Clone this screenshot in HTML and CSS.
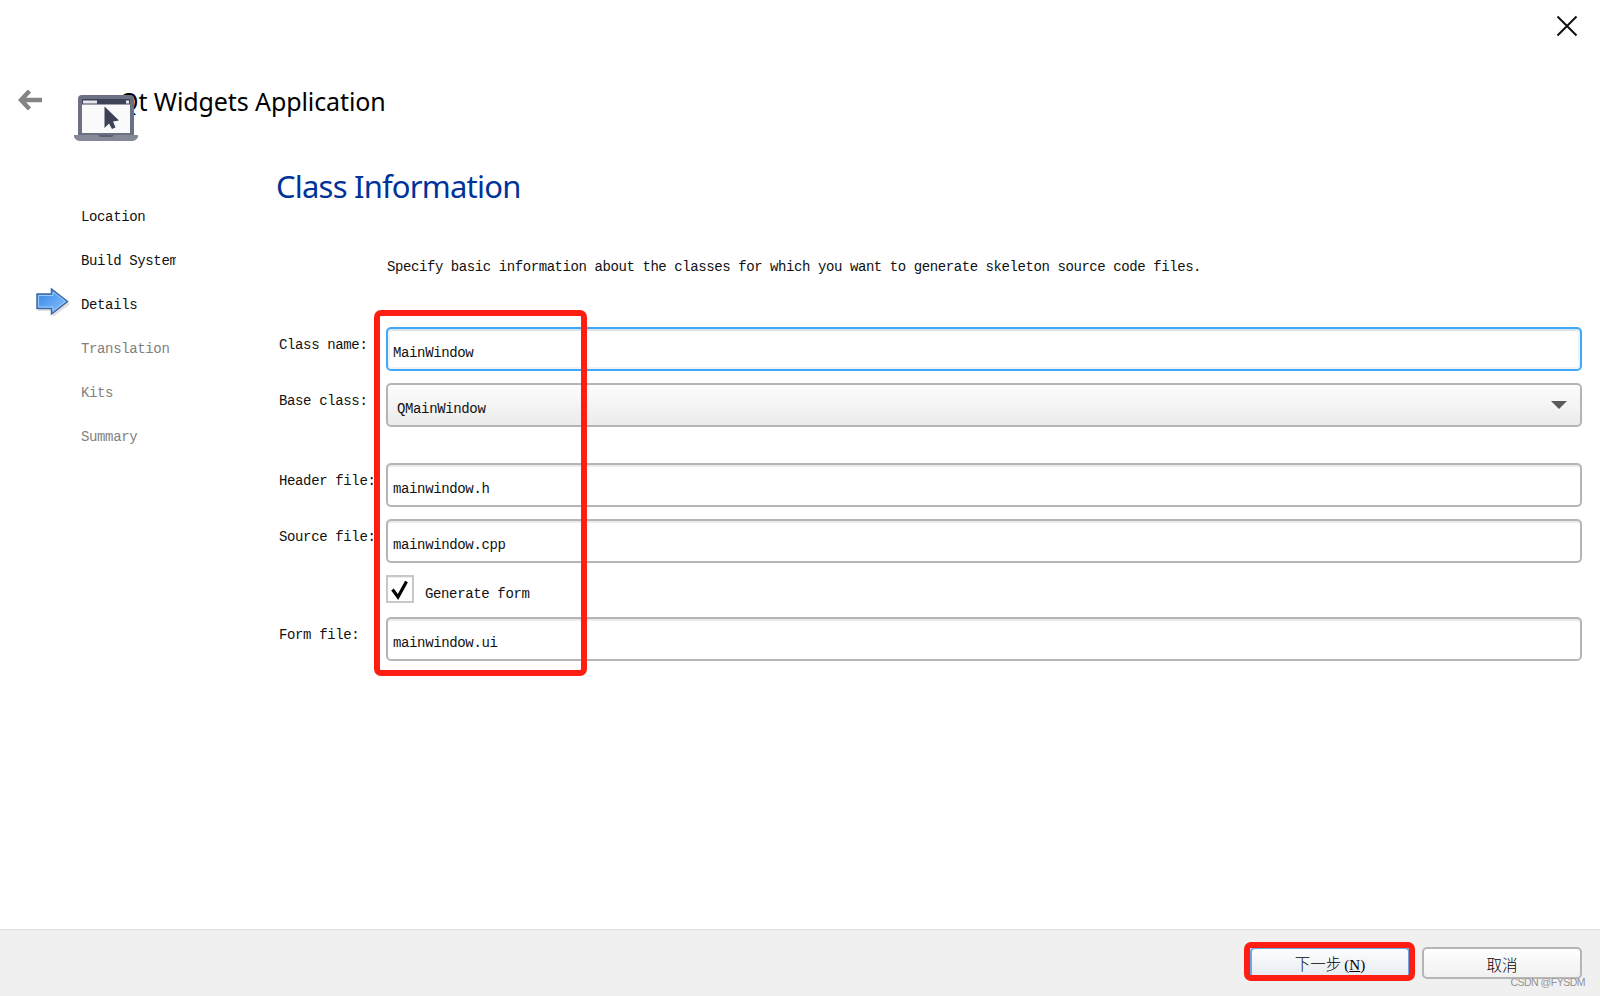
FILE: index.html
```html
<!DOCTYPE html>
<html lang="zh-CN">
<head>
    <meta charset="UTF-8">
    <meta name="viewport" content="width=device-width, initial-scale=1.0">
    <title>Qt Widgets Application</title>
    <link rel="stylesheet" href="styles.css">
</head>
<body>

<div class="wizard">
    <div class="title-bar">
        <svg class="close-icon" width="22" height="22" viewBox="0 0 22 22">
            <path d="M1.5 1.5L20.5 20.5M20.5 1.5L1.5 20.5" stroke="#111" stroke-width="2" fill="none"/>
        </svg>
    </div>

    <div class="header">
        <svg class="back-icon" width="24" height="20" viewBox="0 0 24 20">
            <path d="M11.5 1L3 10L11.5 19M3 10H24" stroke="#848484" stroke-width="4.5" fill="none"/>
        </svg>
        <div class="header-title">Qt Widgets Application</div>
        <!-- Laptop icon, covers the start of the title -->
        <svg class="project-icon" width="64" height="46" viewBox="0 0 64 46">
            <path d="M4 41V4Q4 0 8 0H56Q60 0 60 4V41Z" fill="#6b7082"/>
            <path d="M8 4H56V38H8Z" fill="#fafafa"/>
            <path d="M8 4H56V9.5H8Z" fill="#3f4359"/>
            <path d="M9 5.5H23V8.5H9ZM52 5.5H55V8.5H52Z" fill="#e8e8ea"/>
            <path d="M0 40H64V42Q62 46 58 46H6Q2 46 0 42Z" fill="#858997"/>
            <path d="M24 40H40L38 42H26Z" fill="#5c6072"/>
            <path d="M30.5 11.5V33L35 28.5L38 34L41.5 32.5L39 26.5L45 25.5Z" fill="#3d4158"/>
        </svg>
    </div>

    <div class="content">
        <ul class="steps">
            <li class="step">Location</li>
            <li class="step"><span class="step-name">Build System</span></li>
            <li class="step current">
                <svg class="step-arrow" width="34" height="30" viewBox="0 0 34 30">
                    <defs>
                        <linearGradient id="arrow-fill" x1="0" y1="0" x2="1" y2="1">
                            <stop offset="0" stop-color="#2f83e4"/>
                            <stop offset="1" stop-color="#8fc5ff"/>
                        </linearGradient>
                    </defs>
                    <path d="M2 9H17V3L34 17L17 30V24H2Z" fill="#000" opacity="0.12"/>
                    <path d="M1 7H15.500V2L31.500 14.500L15.500 27V21.500H1Z" fill="url(#arrow-fill)" stroke="#3e6ba0" stroke-width="1.500"/>
                    <path d="M2.500 8.500H17V5L29.500 14.500L17 24V20H2.500Z" fill="none" stroke="#9bcbff" stroke-width="1"/>
                </svg>
                Details
            </li>
            <li class="step pending">Translation</li>
            <li class="step pending">Kits</li>
            <li class="step pending">Summary</li>
        </ul>

        <div class="page">
            <h1 class="page-title">Class Information</h1>
            <p class="page-text">Specify basic information about the classes for which you want to generate skeleton source code files.</p>

            <form class="class-form">
                <label class="form-label" for="class-name">Class name:</label>
                <input class="field focused" type="text" id="class-name" value="MainWindow">

                <label class="form-label">Base class:</label>
                <div class="field combo">
                    <span>QMainWindow</span>
                    <svg width="16" height="8" viewBox="0 0 16 8"><path d="M0 0H16L8 8Z" fill="#5a5a5a"/></svg>
                </div>

                <label class="form-label files" for="header-file">Header file:</label>
                <input class="field files" type="text" id="header-file" value="mainwindow.h">

                <label class="form-label" for="source-file">Source file:</label>
                <input class="field" type="text" id="source-file" value="mainwindow.cpp">

                <div class="check-row">
                    <span class="checkbox">
                        <svg width="18" height="20" viewBox="0 0 18 20">
                            <path d="M1.500 8.500L7 16L15.500 0.500" stroke="#000" stroke-width="3.200" fill="none"/>
                        </svg>
                    </span>
                    <span class="check-label">Generate form</span>
                </div>

                <label class="form-label" for="form-file">Form file:</label>
                <input class="field" type="text" id="form-file" value="mainwindow.ui">
                <div class="highlight fields-highlight"></div>
            </form>
        </div>
    </div>

    <div class="footer">
        <button type="button" class="btn next-btn">下一步<span class="key">(<u>N</u>)</span></button>
        <button type="button" class="btn">取消</button>
        <div class="highlight next-highlight"></div>
        <div class="watermark">CSDN @FYSDM</div>
    </div>
</div>

</body>
</html>
```
FILE: styles.css
```css
:root {
    --border: #b5b5b5;
    --focus: #42a8f5;
    --title-blue: #003399;
    --highlight: #ff1e12;
    --footer: #f0f0f0;
}

* {
    box-sizing: border-box;
}

body {
    margin: 0;
    background-color: #fff;
    color: #111;
    font-family: "Liberation Mono", "Noto Sans CJK SC", monospace;
    font-size: 14px;
    letter-spacing: -0.36px;
}

.wizard {
    display: flex;
    flex-direction: column;
    height: 996px;
    overflow: hidden;
}

.title-bar {
    display: flex;
    justify-content: flex-end;
    height: 76px;
    padding: 15px 22px 0 0;
}

.header {
    position: relative;
    display: flex;
    height: 84px;
    padding-left: 18px;
}

.back-icon {
    margin-top: 14px;
}

.header-title {
    margin-left: 77px;
    padding-top: 8px;
    color: #000;
    font-family: "Noto Sans", sans-serif;
    font-size: 25px;
    line-height: 34px;
    letter-spacing: -0.1px;
    white-space: nowrap;
}

.project-icon {
    position: absolute;
    left: 74px;
    top: 19px;
}

.content {
    display: flex;
    flex: 1;
}

/* Steps on the left */
.steps {
    width: 276px;
    margin: 0;
    padding: 47px 0 0 81px;
    list-style: none;
}

.step {
    position: relative;
    height: 44px;
    line-height: 20px;
    white-space: nowrap;
}

.step-name {
    display: block;
    width: 95px;
    overflow: hidden;
}

.step.pending {
    color: #808080;
}

.step-arrow {
    position: absolute;
    left: -45px;
    top: -8px;
}

.page {
    flex: 1;
    padding-right: 18px;
}

.page-title {
    margin: 4px 0 0;
    color: var(--title-blue);
    font-family: "Noto Sans", sans-serif;
    font-size: 31px;
    font-weight: normal;
    line-height: 44px;
    letter-spacing: -0.8px;
}

.page-text {
    margin: 49px 0 50px 111px;
    line-height: 20px;
    letter-spacing: -0.42px;
}

.class-form {
    position: relative;
    display: grid;
    grid-template-columns: 107px 1fr;
    row-gap: 12px;
    padding-left: 3px;
}

.form-label {
    padding-top: 8px;
    line-height: 20px;
    white-space: nowrap;
}

.field {
    width: 100%;
    height: 44px;
    padding: 7px 6px 0 5px;
    border: 2px solid var(--border);
    border-radius: 5px;
    background-color: #fff;
    box-shadow: inset 0 2px 0 #ebebeb;
    color: #111;
    font: inherit;
    letter-spacing: inherit;
    outline: none;
}

.field.focused {
    border-color: var(--focus);
    box-shadow: inset 0 2px 0 #d5e5f2, inset 0 0 0 2px #edf5fb;
}

.combo {
    display: flex;
    align-items: center;
    justify-content: space-between;
    padding: 7px 13px 0 9px;
    background: linear-gradient(#fdfdfd, #ebebeb);
    box-shadow: none;
}

.combo svg {
    margin-top: -8px;
}

.files {
    margin-top: 24px;
}

.check-row {
    grid-column: 2;
    display: flex;
    height: 30px;
}

.checkbox {
    width: 28px;
    height: 28px;
    padding: 4px 0 0 3px;
    border: 2px solid #c8c8c8;
    box-shadow: inset 0 1px 0 #eee;
}

.checkbox svg {
    display: block;
}

.check-label {
    margin-left: 11px;
    padding-top: 9px;
    line-height: 20px;
}

/* Red frames */
.highlight {
    position: absolute;
    border: 6px solid var(--highlight);
    border-radius: 7px;
    pointer-events: none;
}

.fields-highlight {
    left: 98px;
    top: -17px;
    width: 213px;
    height: 366px;
}

.footer {
    position: relative;
    display: flex;
    justify-content: flex-end;
    gap: 12px;
    height: 67px;
    padding: 17px 18px 0 0;
    border-top: 1px solid #dcdcdc;
    background-color: var(--footer);
}

.btn {
    width: 160px;
    height: 32px;
    padding: 2px 0 0;
    border: 2px solid var(--border);
    border-radius: 5px;
    background: linear-gradient(#fefefe, #f1f1f1);
    color: #000;
    font-family: "Noto Sans CJK SC", sans-serif;
    font-size: 15.500px;
    font-weight: 300;
    letter-spacing: 0;
    line-height: 24px;
}

.next-btn {
    border-color: #6aa6e8;
    background: linear-gradient(#fdfdfe, #e6ebf1);
}

.key {
    font-family: "Liberation Serif", serif;
    font-size: 15px;
    margin-left: 3px;
}

.next-highlight {
    left: 1244px;
    top: 12px;
    width: 171px;
    height: 39px;
}

.watermark {
    position: absolute;
    right: 15px;
    bottom: 8px;
    color: #8f8f8f;
    font-family: "Liberation Sans", sans-serif;
    font-size: 10.500px;
    line-height: 12px;
    letter-spacing: -0.5px;
    text-shadow: 0 0 1px #fff;
}
```
